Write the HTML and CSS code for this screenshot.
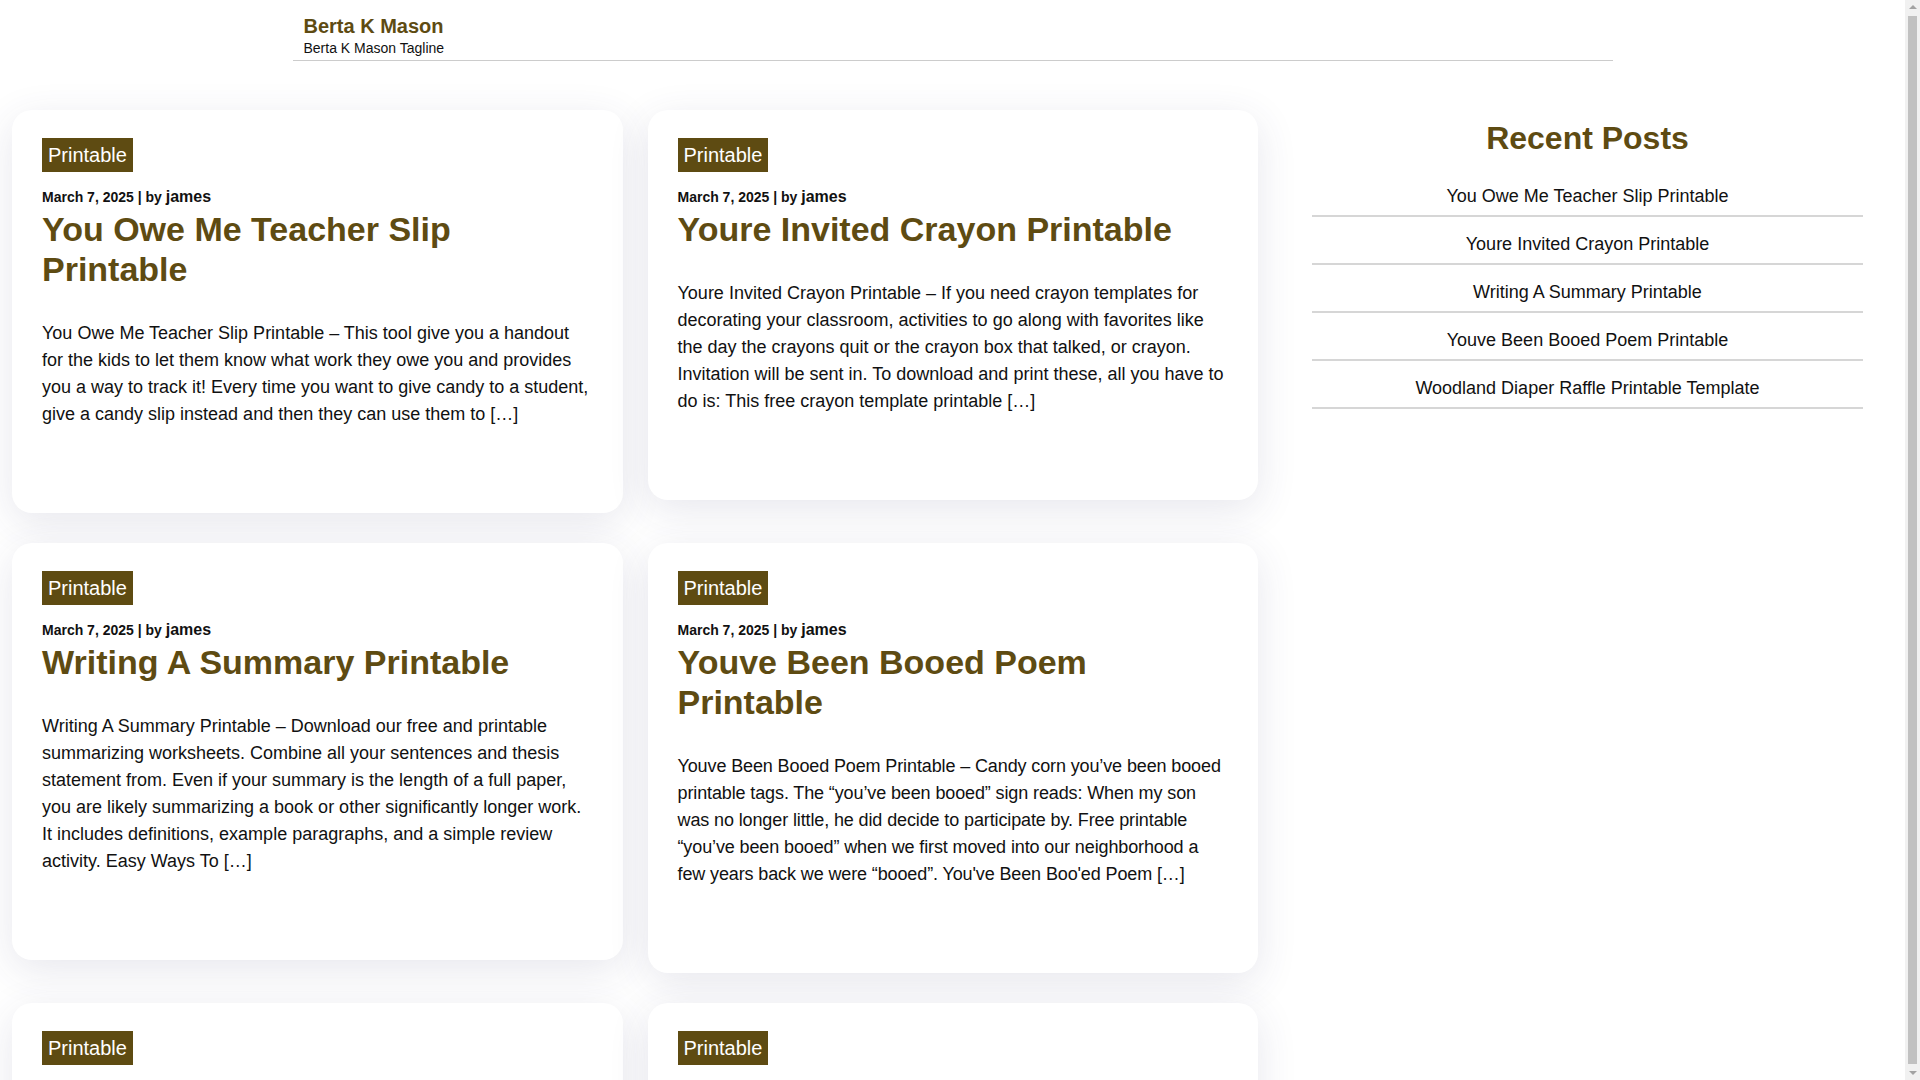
FILE: index.html
```html
<!DOCTYPE html>
<html>
    <head>
        <meta charset="utf-8">
        <title>Berta K Mason</title>
        <link rel="stylesheet" href="styles.css">
    </head>
    <body>

        <header class="site-header">
            <div class="header-inner">
                <a class="site-title" href="#">Berta K Mason</a>
                <p class="site-tagline">Berta K Mason Tagline</p>
            </div>
        </header>

        <div class="site-content">

            <main class="posts">

                <article class="post-card">
                    <a class="post-cat" href="#">Printable</a>
                    <div class="post-meta">March 7, 2025 | by <span class="post-author">james</span></div>
                    <h2 class="post-title"><a href="#">You Owe Me Teacher Slip Printable</a></h2>
                    <p class="post-excerpt">You Owe Me Teacher Slip Printable – This tool give you a handout for the kids to let them know what work they owe you and provides you a way to track it! Every time you want to give candy to a student, give a candy slip instead and then they can use them to […]</p>
                </article>

                <article class="post-card">
                    <a class="post-cat" href="#">Printable</a>
                    <div class="post-meta">March 7, 2025 | by <span class="post-author">james</span></div>
                    <h2 class="post-title"><a href="#">Youre Invited Crayon Printable</a></h2>
                    <p class="post-excerpt">Youre Invited Crayon Printable – If you need crayon templates for decorating your classroom, activities to go along with favorites like the day the crayons quit or the crayon box that talked, or crayon. Invitation will be sent in. To download and print these, all you have to do is: This free crayon template printable […]</p>
                </article>

                <article class="post-card">
                    <a class="post-cat" href="#">Printable</a>
                    <div class="post-meta">March 7, 2025 | by <span class="post-author">james</span></div>
                    <h2 class="post-title"><a href="#">Writing A Summary Printable</a></h2>
                    <p class="post-excerpt">Writing A Summary Printable – Download our free and printable summarizing worksheets. Combine all your sentences and thesis statement from. Even if your summary is the length of a full paper, you are likely summarizing a book or other significantly longer work. It includes definitions, example paragraphs, and a simple review activity. Easy Ways To […]</p>
                </article>

                <article class="post-card">
                    <a class="post-cat" href="#">Printable</a>
                    <div class="post-meta">March 7, 2025 | by <span class="post-author">james</span></div>
                    <h2 class="post-title"><a href="#">Youve Been Booed Poem Printable</a></h2>
                    <p class="post-excerpt excerpt-tight">Youve Been Booed Poem Printable – Candy corn you’ve been booed printable tags. The “you’ve been booed” sign reads: When my son was no longer little, he did decide to participate by. Free printable “you’ve been booed” when we first moved into our neighborhood a few years back we were “booed”. You've Been Boo'ed Poem […]</p>
                </article>

                <article class="post-card">
                    <a class="post-cat" href="#">Printable</a>
                    <div class="post-meta">March 7, 2025 | by <span class="post-author">james</span></div>
                    <h2 class="post-title"><a href="#">Woodland Diaper Raffle Printable Template</a></h2>
                    <p class="post-excerpt">Woodland Diaper Raffle Printable Template – Printable woodland diaper raffle tickets for your baby shower, with cute forest animals and space for guests to write their names. Print, cut and hand them out to everyone who brings a pack of diapers along to the party […]</p>
                </article>

                <article class="post-card">
                    <a class="post-cat" href="#">Printable</a>
                    <div class="post-meta">March 7, 2025 | by <span class="post-author">james</span></div>
                    <h2 class="post-title"><a href="#">Printable Reading Log Sheet</a></h2>
                    <p class="post-excerpt">Printable Reading Log Sheet – Keep track of the books your kids read every week with this simple log. Write the title, the author and how many pages were read each day, then add it all up at the end of the month […]</p>
                </article>

            </main>

            <aside class="sidebar">
                <h2 class="widget-title">Recent Posts</h2>
                <ul class="recent-list">
                    <li><a href="#">You Owe Me Teacher Slip Printable</a></li>
                    <li><a href="#">Youre Invited Crayon Printable</a></li>
                    <li><a href="#">Writing A Summary Printable</a></li>
                    <li><a href="#">Youve Been Booed Poem Printable</a></li>
                    <li><a href="#">Woodland Diaper Raffle Printable Template</a></li>
                </ul>
            </aside>

        </div>

        <!-- window scrollbar as it shows in the screenshot -->
        <div class="fake-scrollbar">
            <span class="sb-arrow sb-up"></span>
            <span class="sb-thumb"></span>
            <span class="sb-arrow sb-down"></span>
        </div>

    </body>
</html>
```

FILE: styles.css
```css
*{
    margin: 0;
    padding: 0;
    box-sizing: border-box;
}

body, html{
    font-family: "Liberation Sans", Arial, sans-serif;
    font-size: 18px;
    color: #111;
    background: #fff;
}

body{
    margin-right: 15px;
}

a{
    text-decoration: none;
    color: inherit;
}

/* header */
.site-header{
    padding: 0 12px;
}

.header-inner{
    max-width: 1320px;
    margin: 0 auto;
    padding: 14px 11px 2px;
    border-bottom: 1px solid #ccc;
}

.site-title{
    display: block;
    font-size: 20px;
    line-height: 24px;
    font-weight: bold;
    color: #5e4b12;
}

.site-tagline{
    font-size: 14px;
    line-height: 20px;
}

/* main layout */
.site-content{
    display: grid;
    grid-template-columns: 2fr 1fr;
    padding-top: 49px;
}

.posts{
    display: grid;
    grid-template-columns: 1fr 1fr;
    column-gap: 25px;
    row-gap: 30px;
    align-items: start;
    padding: 0 12px;
}

.post-card{
    background: #fff;
    border-radius: 20px;
    padding: 28px 30px 31px 30px;
    box-shadow: 0 10px 40px rgba(60, 60, 110, 0.12);
}

.post-cat{
    display: inline-block;
    background: #5e4b12;
    color: #fff;
    font-size: 20px;
    line-height: 24px;
    padding: 5px 6px;
    margin-bottom: 13px;
}

.post-meta{
    font-size: 14px;
    line-height: 24px;
    font-weight: bold;
}

.post-author{
    font-size: 16px;
}

.post-title{
    font-size: 34px;
    line-height: 40px;
    color: #5e4b12;
}

.post-excerpt{
    margin-top: 31px;
    margin-bottom: 54px;
    line-height: 27px;
}

.excerpt-tight{
    letter-spacing: -0.12px;
}

/* sidebar */
.sidebar{
    padding: 0 42px;
}

.widget-title{
    text-align: center;
    font-size: 32px;
    line-height: 38px;
    color: #5e4b12;
    margin-top: 9px;
    margin-bottom: 12px;
}

.recent-list{
    list-style: none;
}

.recent-list li{
    text-align: center;
    line-height: 27px;
    padding: 14px 0 5px;
    border-bottom: 2px solid #d6d6d6;
}

/* scrollbar */
.fake-scrollbar{
    position: fixed;
    top: 0;
    right: 0;
    bottom: 0;
    width: 15px;
    background: #f1f1f1;
    display: flex;
    flex-direction: column;
    align-items: center;
}

.sb-arrow{
    width: 0;
    height: 0;
    border-left: 4px solid transparent;
    border-right: 4px solid transparent;
    margin: 5px 0;
}

.sb-up{
    border-bottom: 4px solid #a3a3a3;
}

.sb-down{
    border-top: 4px solid #a3a3a3;
}

.sb-thumb{
    flex: 1;
    width: 9px;
    margin: 2px 0;
    background: #c1c1c1;
}
```
